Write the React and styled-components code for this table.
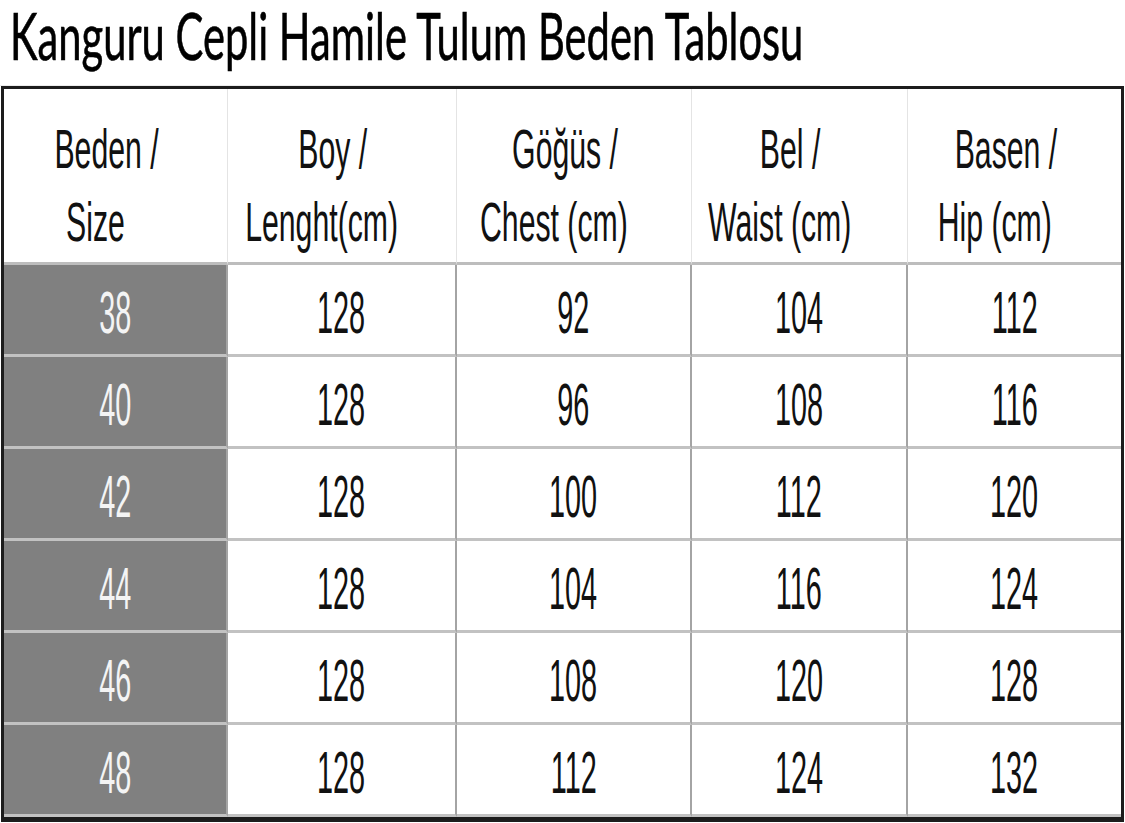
import React, { useLayoutEffect, useRef, useState } from "react";
import styled, { createGlobalStyle } from "styled-components";

const GlobalStyle = createGlobalStyle`
  html, body {
    margin: 0;
    padding: 0;
    background: #ffffff;
  }
  body {
    font-family: "Liberation Sans", Arial, sans-serif;
    color: #111111;
  }
`;

const headers = [
  ["Beden /", "Size"],
  ["Boy /", "Lenght(cm)"],
  ["Göğüs /", "Chest (cm)"],
  ["Bel /", "Waist (cm)"],
  ["Basen /", "Hip (cm)"],
];

const rows = [
  ["38", "128", "92", "104", "112"],
  ["40", "128", "96", "108", "116"],
  ["42", "128", "100", "112", "120"],
  ["44", "128", "104", "116", "124"],
  ["46", "128", "108", "120", "128"],
  ["48", "128", "112", "124", "132"],
];

const TITLE_WIDTH = 793;

// squeeze the title horizontally (and stretch it up) like the scaled table image
function Title({ children }) {
  const ref = useRef(null);
  const [scale, setScale] = useState(0.8);

  useLayoutEffect(() => {
    if (ref.current) {
      const w = ref.current.offsetWidth;
      if (w > 0) setScale(TITLE_WIDTH / w);
    }
  }, []);

  return (
    <TitleBar>
      <TitleText ref={ref} style={{ transform: `scale(${scale}, 1.25)` }}>
        {children}
      </TitleText>
    </TitleBar>
  );
}

export default function App() {
  return (
    <Page>
      <GlobalStyle />
      <Title>Kanguru Cepli Hamile Tulum Beden Tablosu</Title>
      <Table>
        {headers.map(([top, bottom], i) => (
          <HeadCell key={top} $last={i === headers.length - 1}>
            <HeadLine $shift={-9}>{top}</HeadLine>
            <HeadLine $shift={-20}>{bottom}</HeadLine>
          </HeadCell>
        ))}
        {rows.map((row) =>
          row.map((value, i) => (
            <Cell key={row[0] + "-" + i} $size={i === 0} $last={i === row.length - 1}>
              <Value>{value}</Value>
            </Cell>
          ))
        )}
      </Table>
    </Page>
  );
}

const Page = styled.div`
  width: 1125px;
  height: 823px;
  background: #ffffff;
`;

const TitleBar = styled.div`
  display: flex;
  align-items: flex-start;
  height: 86px;
  padding-left: 10px;
  box-sizing: border-box;
  background: linear-gradient(#ececec, #ececec) no-repeat left bottom / 820px 1px;
`;

const TitleText = styled.span`
  display: inline-block;
  flex: none;
  font-family: Lato, "Open Sans", sans-serif;
  font-size: 52px;
  line-height: 56px;
  color: #000000;
  -webkit-text-stroke: 0.5px #000000;
  white-space: nowrap;
  transform-origin: left top;
`;

const Table = styled.div`
  display: grid;
  grid-template-columns: 224px 229px 235px 216px 213px;
  grid-template-rows: 176px repeat(6, 92px);
  margin-left: 1px;
  width: 1123px;
  box-sizing: border-box;
  border: 3px solid #1c1c1c;
  border-bottom-width: 5px;
  background: #ffffff;
`;

const HeadCell = styled.div`
  display: flex;
  flex-direction: column;
  align-items: center;
  justify-content: center;
  padding-top: 18px;
  box-sizing: border-box;
  border-right: ${(p) => (p.$last ? "none" : "1px solid #e4e4e4")};
  border-bottom: 3px solid #bdbdbd;
  font-size: 56px;
  line-height: 73px;
  color: #111111;
`;

const HeadLine = styled.span`
  display: block;
  white-space: nowrap;
  transform: translateX(${(p) => p.$shift}px) scaleX(0.54);
  transform-origin: center center;
`;

const Cell = styled.div`
  display: flex;
  align-items: center;
  justify-content: center;
  padding-top: 6px;
  box-sizing: border-box;
  background: ${(p) => (p.$size ? "#808080" : "#ffffff")};
  color: ${(p) => (p.$size ? "#f4f4f4" : "#111111")};
  border-right: ${(p) => (p.$last ? "none" : "2px solid #a4a4a4")};
  border-bottom: 3px solid #c2c2c2;
  font-size: 60px;
  line-height: 80px;
`;

const Value = styled.span`
  display: block;
  white-space: nowrap;
  transform: scaleX(0.48);
  transform-origin: center center;
`;
